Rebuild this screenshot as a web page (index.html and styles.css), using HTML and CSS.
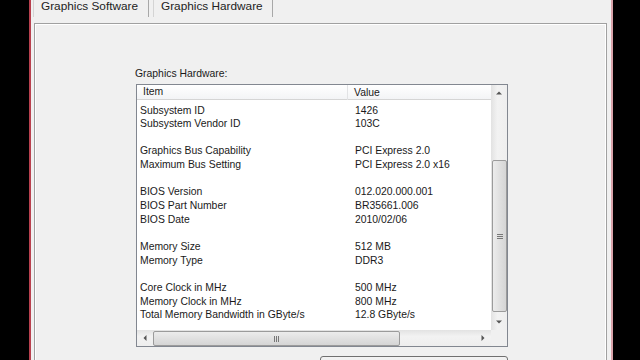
FILE: index.html
```html
<!DOCTYPE html>
<html lang="en">
<head>
  <meta charset="UTF-8" />
  <title>Graphics Hardware</title>
  <link rel="stylesheet" href="styles.css">
</head>
<body>
  <div class="window">
    <div class="tabs">
      <div class="tab">Graphics Software</div>
      <div class="tab">Graphics Hardware</div>
    </div>
    <div class="panel">
      <div class="caption">Graphics Hardware:</div>
      <div class="list">
        <div class="view">
          <div class="header">
            <div class="col">Item</div>
            <div class="col">Value</div>
          </div>
          <div class="rows">
            <div class="row"><span>Subsystem ID</span><span>1426</span></div>
            <div class="row"><span>Subsystem Vendor ID</span><span>103C</span></div>
            <div class="row"></div>
            <div class="row"><span>Graphics Bus Capability</span><span>PCI Express 2.0</span></div>
            <div class="row"><span>Maximum Bus Setting</span><span>PCI Express 2.0 x16</span></div>
            <div class="row"></div>
            <div class="row"><span>BIOS Version</span><span>012.020.000.001</span></div>
            <div class="row"><span>BIOS Part Number</span><span>BR35661.006</span></div>
            <div class="row"><span>BIOS Date</span><span>2010/02/06</span></div>
            <div class="row"></div>
            <div class="row"><span>Memory Size</span><span>512 MB</span></div>
            <div class="row"><span>Memory Type</span><span>DDR3</span></div>
            <div class="row"></div>
            <div class="row"><span>Core Clock in MHz</span><span>500 MHz</span></div>
            <div class="row"><span>Memory Clock in MHz</span><span>800 MHz</span></div>
            <div class="row"><span>Total Memory Bandwidth in GByte/s</span><span>12.8 GByte/s</span></div>
          </div>
        </div>
        <div class="vscroll">
          <div class="arrow up"></div>
          <div class="track">
            <div class="thumb vthumb"><span class="grip"></span></div>
          </div>
          <div class="arrow down"></div>
        </div>
        <div class="hscroll">
          <div class="arrow left"></div>
          <div class="track">
            <div class="thumb hthumb"><span class="grip"></span></div>
          </div>
          <div class="arrow right"></div>
        </div>
        <div class="corner"></div>
      </div>
      <div class="button"></div>
    </div>
  </div>
</body>
</html>
```

FILE: styles.css
```css
body {
  margin: 0;
  background-color: #000;
  font-family: "Liberation Sans", Arial, sans-serif;
  color: #1a1a1a;
  height: 360px;
  overflow: hidden;
}
.window {
  margin-left: 29px;
  width: 578px;
  height: 360px;
  overflow: hidden;
  background-color: #f0f0f0;
  border-left: 2px solid #b8404e;
  border-right: 2px solid #d9a3aa;
  padding-left: 2px;
  box-sizing: content-box;
}
.tabs {
  display: flex;
  gap: 4px;
  height: 23px;
}
.tab {
  height: 17px;
  padding: 0 0 0 7px;
  font-size: 11.8px;
  line-height: 12px;
  border-left: 1px solid #d4d4d4;
  border-right: 1px solid #a8a8a8;
  box-sizing: border-box;
  color: #222;
}
.tab:first-child {
  width: 116px;
}
.tab:last-child {
  width: 120px;
}
.panel {
  margin-left: 1px;
  width: 573px;
  height: 337px;
  box-sizing: border-box;
  border: 1px solid #a0a0a0;
  border-bottom: none;
  box-shadow: inset 1px 1px 0 #fff, inset -1px 0 0 #fff;
  padding: 44px 0 0 100px;
}
.caption {
  font-size: 10.4px;
  line-height: 13px;
  height: 17px;
  margin-top: -1px;
}
.list {
  margin-left: 1px;
  width: 372px;
  height: 263px;
  box-sizing: border-box;
  border: 1px solid #828790;
  background-color: #fff;
  display: grid;
  grid-template-columns: 354px 16px;
  grid-template-rows: 245px 16px;
}
.view {
  overflow: hidden;
  font-size: 10.4px;
}
.header {
  display: grid;
  grid-template-columns: 211px 1fr;
  height: 15px;
  box-sizing: border-box;
  border-bottom: 1px solid #d5d5d5;
  background: linear-gradient(#fff, #f3f4f6);
  line-height: 14px;
  padding-top: 1px;
}
.header .col {
  padding-left: 6px;
}
.header .col:first-child {
  border-right: 1px solid #e2e3e5;
  margin-top: -1px;
}
.rows {
  padding-top: 3.5px;
}
.row {
  display: grid;
  grid-template-columns: 211px 1fr;
  height: 13.67px;
  line-height: 13.67px;
  white-space: nowrap;
}
.row span:first-child {
  padding-left: 3px;
}
.row span:last-child {
  padding-left: 7px;
}
.vscroll, .hscroll {
  display: flex;
}
.vscroll {
  flex-direction: column;
  background: linear-gradient(90deg, #e2e2e2, #f2f2f2 40%, #eeeeee);
}
.hscroll {
  background: linear-gradient(#e2e2e2, #f2f2f2 40%, #eeeeee);
}
.corner {
  background-color: #f0f0f0;
}
.arrow {
  width: 16px;
  height: 16px;
  flex: none;
  position: relative;
}
.arrow::after {
  content: "";
  position: absolute;
  left: 50%;
  top: 50%;
  width: 0;
  height: 0;
  border: 3px solid transparent;
}
.arrow.up::after {
  border-bottom-color: #555;
  transform: translate(-50%, -75%);
}
.arrow.down::after {
  border-top-color: #555;
  transform: translate(-50%, -25%);
}
.arrow.left::after {
  border-right-color: #555;
  transform: translate(-75%, -50%);
}
.arrow.right::after {
  border-left-color: #555;
  transform: translate(-25%, -50%);
}
.track {
  flex: 1;
}
.thumb {
  box-sizing: border-box;
  border: 1px solid #9b9b9b;
  border-radius: 2px;
  display: flex;
  align-items: center;
  justify-content: center;
}
.vthumb {
  margin-top: 59px;
  margin-left: 1px;
  width: 15px;
  height: 152px;
  background: linear-gradient(90deg, #ececec, #e0e0e0 50%, #d5d5d5);
}
.hthumb {
  width: 247px;
  height: 15px;
  margin-top: 1px;
  background: linear-gradient(#ececec, #e0e0e0 50%, #d5d5d5);
}
.grip {
  display: block;
}
.vthumb .grip {
  width: 6px;
  height: 5px;
  margin-top: 1px;
  background: repeating-linear-gradient(#777 0 1px, transparent 1px 2px);
}
.hthumb .grip {
  width: 5px;
  height: 6px;
  background: repeating-linear-gradient(90deg, #777 0 1px, transparent 1px 2px);
}
.button {
  margin: 9px 0 0 185px;
  width: 188px;
  height: 23px;
  box-sizing: border-box;
  border: 1px solid #707070;
  border-radius: 3px;
  background: linear-gradient(#f2f2f2, #ebebeb 50%, #dddddd);
}
```
